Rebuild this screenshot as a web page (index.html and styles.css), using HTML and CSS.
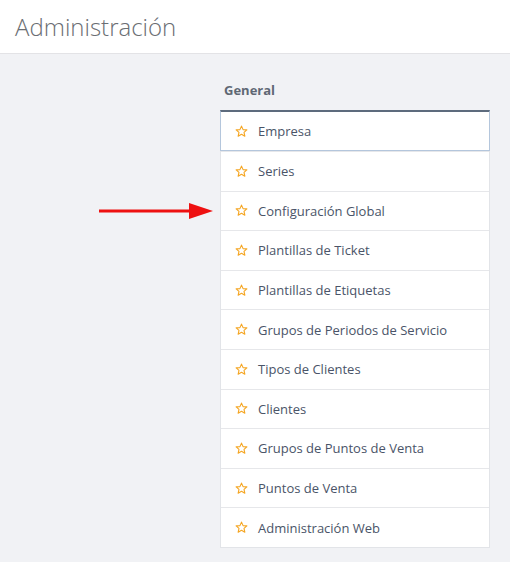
FILE: index.html
```html
<!DOCTYPE html>
<html lang="es">
<head>
<meta charset="utf-8">
<title>Administración</title>
<link rel="stylesheet" href="styles.css">
</head>
<body>
<header class="topbar"><h1 class="title">Administración</h1></header>
<main class="content">
  <section class="group">
    <h2 class="group-title">General</h2>
    <ul class="menu">
      <li class="item active"><svg class="star" viewBox="0 0 14 14"><path d="M7 1.2 8.7 5 12.8 5.3 9.7 8 10.6 12.1 7 10 3.4 12.1 4.3 8 1.2 5.3 5.3 5Z"/></svg>Empresa</li>
      <li class="item"><svg class="star" viewBox="0 0 14 14"><path d="M7 1.2 8.7 5 12.8 5.3 9.7 8 10.6 12.1 7 10 3.4 12.1 4.3 8 1.2 5.3 5.3 5Z"/></svg>Series</li>
      <li class="item"><svg class="star" viewBox="0 0 14 14"><path d="M7 1.2 8.7 5 12.8 5.3 9.7 8 10.6 12.1 7 10 3.4 12.1 4.3 8 1.2 5.3 5.3 5Z"/></svg>Configuración Global</li>
      <li class="item"><svg class="star" viewBox="0 0 14 14"><path d="M7 1.2 8.7 5 12.8 5.3 9.7 8 10.6 12.1 7 10 3.4 12.1 4.3 8 1.2 5.3 5.3 5Z"/></svg>Plantillas de Ticket</li>
      <li class="item"><svg class="star" viewBox="0 0 14 14"><path d="M7 1.2 8.7 5 12.8 5.3 9.7 8 10.6 12.1 7 10 3.4 12.1 4.3 8 1.2 5.3 5.3 5Z"/></svg>Plantillas de Etiquetas</li>
      <li class="item"><svg class="star" viewBox="0 0 14 14"><path d="M7 1.2 8.7 5 12.8 5.3 9.7 8 10.6 12.1 7 10 3.4 12.1 4.3 8 1.2 5.3 5.3 5Z"/></svg>Grupos de Periodos de Servicio</li>
      <li class="item"><svg class="star" viewBox="0 0 14 14"><path d="M7 1.2 8.7 5 12.8 5.3 9.7 8 10.6 12.1 7 10 3.4 12.1 4.3 8 1.2 5.3 5.3 5Z"/></svg>Tipos de Clientes</li>
      <li class="item"><svg class="star" viewBox="0 0 14 14"><path d="M7 1.2 8.7 5 12.8 5.3 9.7 8 10.6 12.1 7 10 3.4 12.1 4.3 8 1.2 5.3 5.3 5Z"/></svg>Clientes</li>
      <li class="item"><svg class="star" viewBox="0 0 14 14"><path d="M7 1.2 8.7 5 12.8 5.3 9.7 8 10.6 12.1 7 10 3.4 12.1 4.3 8 1.2 5.3 5.3 5Z"/></svg>Grupos de Puntos de Venta</li>
      <li class="item"><svg class="star" viewBox="0 0 14 14"><path d="M7 1.2 8.7 5 12.8 5.3 9.7 8 10.6 12.1 7 10 3.4 12.1 4.3 8 1.2 5.3 5.3 5Z"/></svg>Puntos de Venta</li>
      <li class="item"><svg class="star" viewBox="0 0 14 14"><path d="M7 1.2 8.7 5 12.8 5.3 9.7 8 10.6 12.1 7 10 3.4 12.1 4.3 8 1.2 5.3 5.3 5Z"/></svg>Administración Web</li>
    </ul>
  </section>
  <svg class="arrow" width="116" height="20" viewBox="0 0 116 20"><line x1="0" y1="10" x2="92" y2="10" stroke="#ee1111" stroke-width="3"/><polygon points="90,2 114,10 90,18" fill="#ee1111"/></svg>
</main>
</body>
</html>
```
FILE: styles.css
```css
html, body { margin: 0; padding: 0; }
body {
  background: #f1f2f5;
  font-family: "Open Sans", "Noto Sans", sans-serif;
  width: 510px;
  height: 562px;
  overflow: hidden;
}
.topbar {
  background: #fff;
  border-bottom: 1px solid #e3e3e6;
  box-sizing: border-box;
  height: 54px;
}
.title {
  margin: 0;
  padding: 11px 0 0 15px;
  font-size: 24px;
  font-weight: 300;
  line-height: 32px;
  color: #6b6e73;
}
.content {
  position: relative;
  padding: 26px 0 0 220px;
}
.group { width: 270px; }
.group-title {
  margin: 0 0 10px 4px;
  font-size: 13px;
  font-weight: 700;
  line-height: 20px;
  color: #5f6874;
}
.menu {
  list-style: none;
  margin: 0;
  padding: 0;
  background: #fff;
  border: 1px solid #e2e4e8;
}
.item {
  display: flex;
  align-items: center;
  height: 39.6px;
  box-sizing: border-box;
  border-top: 1px solid #e6e7ea;
  padding-left: 14px;
  font-size: 13px;
  color: #4a5468;
}
.item:first-child { border-top: none; }
.item.active {
  margin: -1px -1px 0;
  padding-left: 14px;
  border: 1px solid #b4c6dc;
  border-top: 2px solid #5d6b7d;
  height: 41px;
}
.star {
  width: 13px;
  height: 13px;
  margin-right: 10px;
  flex: none;
  fill: none;
  stroke: #f5a623;
  stroke-width: 1.2;
  stroke-linejoin: round;
}
.arrow {
  position: absolute;
  left: 99px;
  top: 147px;
}
```
